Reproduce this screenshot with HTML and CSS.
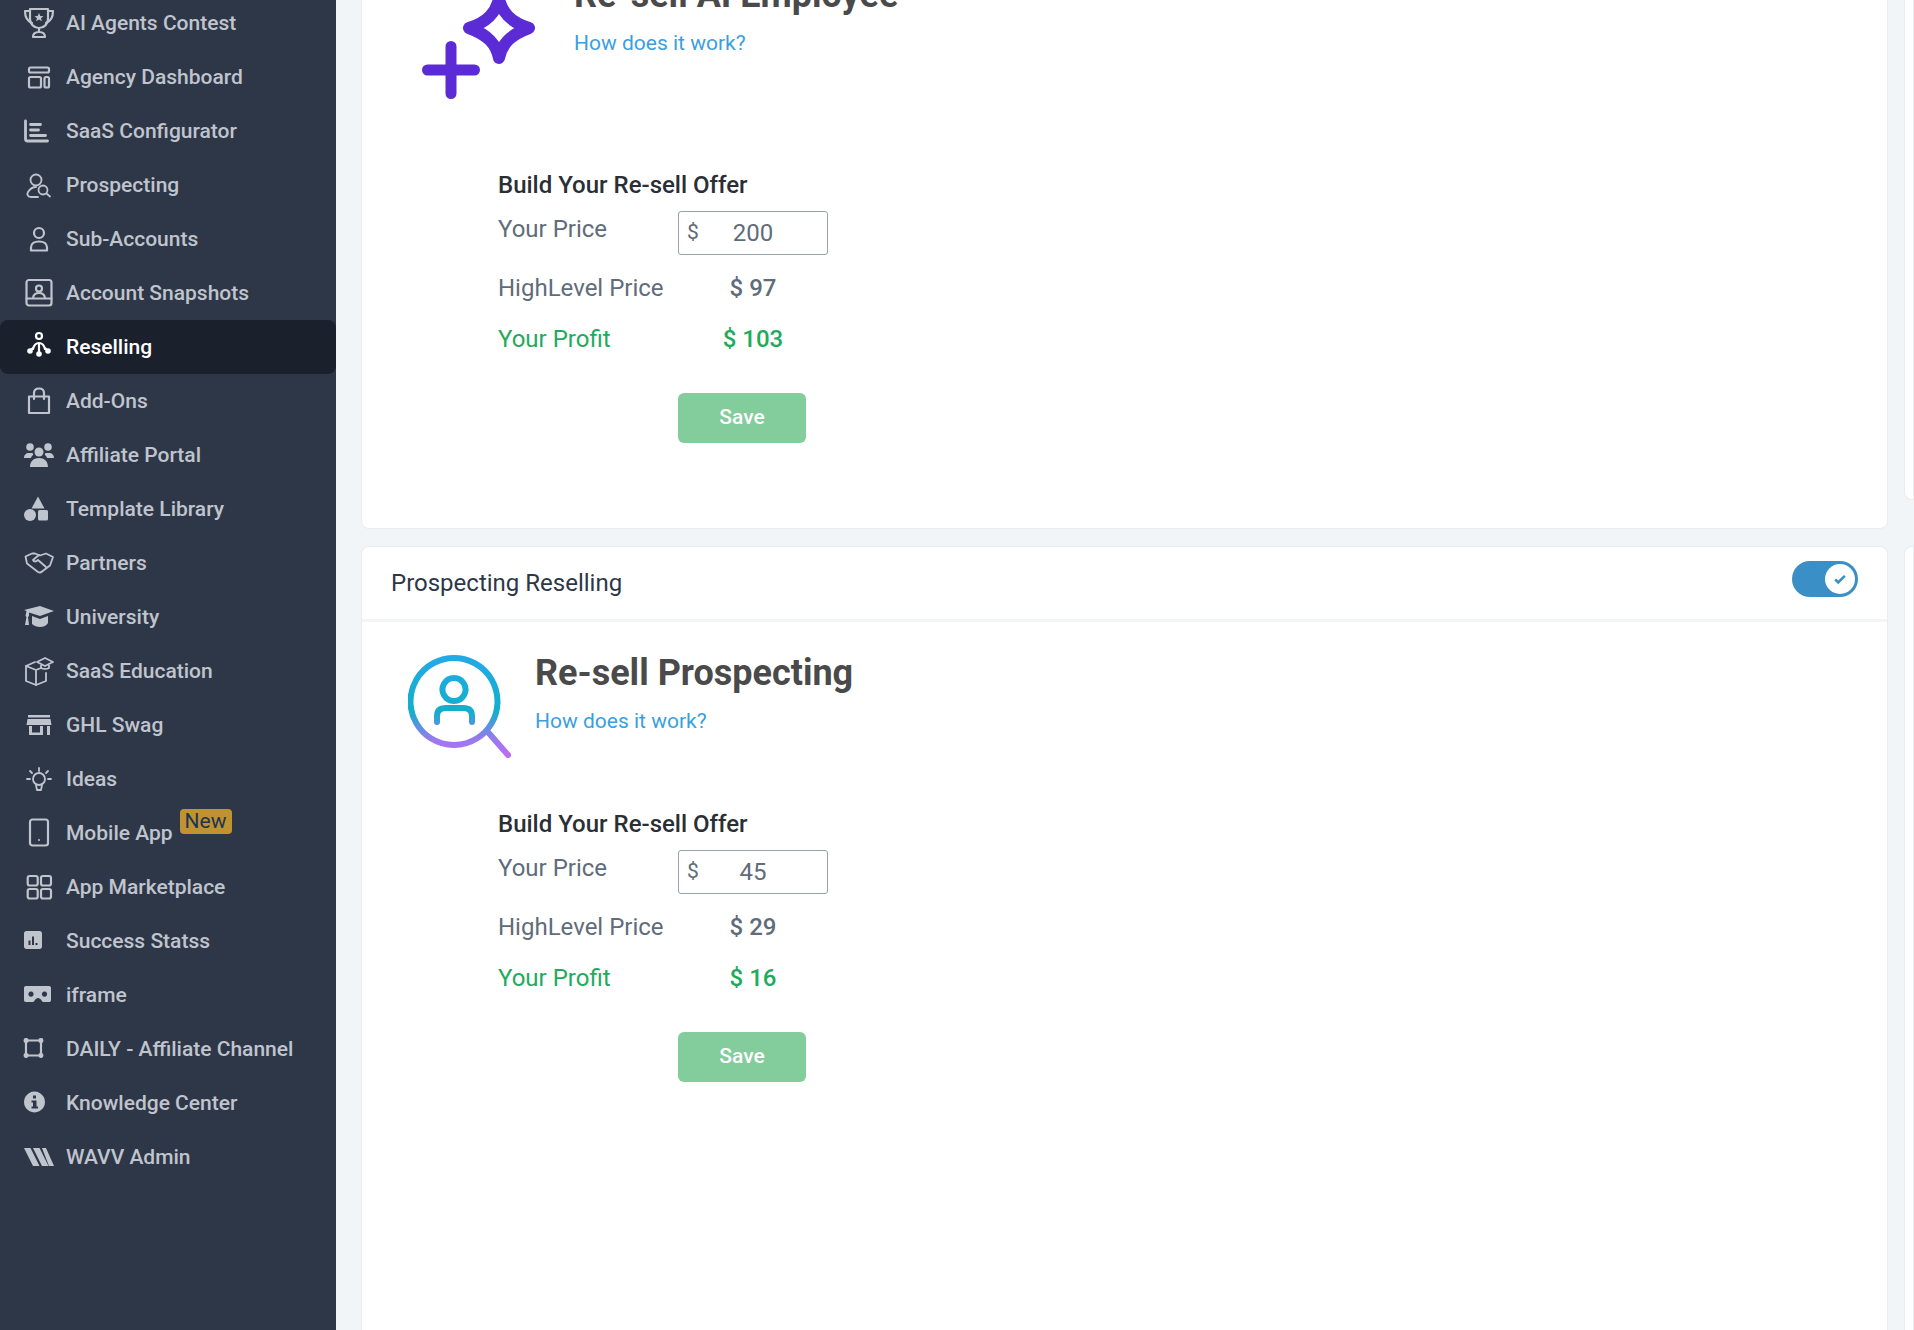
FILE: index.html
```html
<!DOCTYPE html>
<html lang="en">
<head>
  <meta charset="UTF-8" />
  <title>Reselling</title>
  <link rel="stylesheet" href="styles.css">
</head>
<body>
  <div class="app">
    <nav class="sidebar">
      <a class="nav-item"><svg class="nav-icon line" viewBox="0 0 34 34"><path d="M8 3h18v10c0 5-4 9-9 9s-9-4-9-9z"/><path d="M8 5H3c0 6 2 10 7 12M26 5h5c0 6-2 10-7 12"/><path d="M17 22v4M11 31c0-3 2-5 6-5s6 2 6 5z"/><path class="fill" d="M17 7l1.300 3 3.200.2-2.500 2 .9 3.100-2.900-1.800-2.900 1.800.9-3.100-2.500-2 3.200-.2z"/></svg><span>AI Agents Contest</span></a>
      <a class="nav-item"><svg class="nav-icon line" viewBox="0 0 34 34"><rect x="7" y="7.500" width="20" height="5" rx="1.500"/><rect x="7" y="17" width="12" height="10.500" rx="1.500"/><rect x="22.500" y="17" width="4.500" height="10.500" rx="1.500"/></svg><span>Agency Dashboard</span></a>
      <a class="nav-item"><svg class="nav-icon line heavy" viewBox="0 0 34 34"><path d="M3.500 7v18c0 1.500.5 2 2 2h20"/><path d="M8.500 10.500h10M8.500 16h8M8.500 21.500h15"/></svg><span>SaaS Configurator</span></a>
      <a class="nav-item"><svg class="nav-icon thin" viewBox="0 0 34 34"><circle cx="14" cy="12" r="5.500"/><path d="M16 29H9c-4 0-4-3-3-5 2-3 5-5 8-5"/><circle cx="21" cy="22" r="4.500"/><path d="M24.500 25.500l3.500 3"/></svg><span>Prospecting</span></a>
      <a class="nav-item"><svg class="nav-icon line" viewBox="0 0 34 34"><circle cx="17" cy="11" r="5"/><path d="M9 28.500v-3c0-4 3.500-6 8-6s8 2 8 6v3z"/></svg><span>Sub-Accounts</span></a>
      <a class="nav-item"><svg class="nav-icon line" viewBox="0 0 34 34"><rect x="4.500" y="4" width="25" height="25.500" rx="2.500"/><path d="M4.500 22.500h25"/><circle cx="17" cy="12.500" r="3"/><path d="M11 22c.5-3.500 3-5 6-5s5.500 1.500 6 5"/></svg><span>Account Snapshots</span></a>
      <a class="nav-item active"><svg class="nav-icon line" viewBox="0 0 34 34"><circle cx="17" cy="6" r="3"/><path d="M11 19c1-4 3-6 6-6s5 2 6 6M17 13v10M11 18l-3 3M23 18l3 3"/><circle class="fill" cx="8" cy="21" r="2.800"/><circle class="fill" cx="17" cy="24" r="2.800"/><circle class="fill" cx="26" cy="21" r="2.800"/></svg><span>Reselling</span></a>
      <a class="nav-item"><svg class="nav-icon line" viewBox="0 0 34 34"><path d="M7 12.500h20v16.500H7z"/><path d="M12 15V9c0-3 2-4.500 5-4.500s5 1.500 5 4.500v6"/></svg><span>Add-Ons</span></a>
      <a class="nav-item"><svg class="nav-icon solid" viewBox="0 0 34 34"><circle cx="8" cy="9" r="3.800"/><circle cx="26" cy="9" r="3.800"/><circle cx="17" cy="14" r="4.500"/><path d="M2 20c0-3 2-5 5-5h3c1 0 1.500 1 1 2-1 1-2 2-2 3zM32 20c0-3-2-5-5-5h-3c-1 0-1.500 1-1 2 1 1 2 2 2 3zM8 29c0-6 4-9 9-9s9 3 9 9z"/></svg><span>Affiliate Portal</span></a>
      <a class="nav-item"><svg class="nav-icon solid" viewBox="0 0 34 34"><path d="M16 4.500l6.500 12h-13z"/><circle cx="8" cy="23" r="6"/><rect x="16" y="18" width="10" height="10.500" rx="1.500"/></svg><span>Template Library</span></a>
      <a class="nav-item"><svg class="nav-icon thin" viewBox="0 0 34 34"><path d="M10 7.500l-6.500 3 1.500 7 11 8.500c2 1 3 .5 4-.5l8-6 3-8.500-7-3.500-6 2-5-2z"/><path d="M17 9l-6 5c1 2 3 2 5 0l8 7"/></svg><span>Partners</span></a>
      <a class="nav-item"><svg class="nav-icon solid" viewBox="0 0 34 34"><path d="M18 6l14 5-14 5-11-3.500v3.500l-1 1 1 8H3l1.500-8-1-1 1-5-2.500-1z"/><path d="M10 16l8 3 8-3v7c-2 3-5 4-8 4s-6-1-8-3z"/></svg><span>University</span></a>
      <a class="nav-item"><svg class="nav-icon thin" viewBox="0 0 34 34"><path d="M13 8l-9 4v15l10 4 10-4v-8"/><path d="M4 12l10 4 5-2M14 16v15"/><path d="M15 8l8-4 8 4-8 4zM19 10v4c2 1 6 1 8 0v-4"/></svg><span>SaaS Education</span></a>
      <a class="nav-item"><svg class="nav-icon solid" viewBox="0 0 34 34"><path d="M6 7h22v2.500H6zM5.500 11h23l1 6h-25zM7 18h3v9H7zM25 18h3v9h-3zM10 24.500h8V18h3v9H10z"/></svg><span>GHL Swag</span></a>
      <a class="nav-item"><svg class="nav-icon thin" viewBox="0 0 34 34"><circle cx="17" cy="17" r="6"/><path d="M14 23l1 5h4l1-5M17 6v3M8 9l2 2M26 9l-2 2M5 17h3M26 17h3"/></svg><span>Ideas</span></a>
      <a class="nav-item"><svg class="nav-icon line" viewBox="0 0 34 34"><rect x="8" y="3.500" width="18" height="26" rx="2.500"/><circle class="fill" cx="17" cy="24" r="1"/></svg><span>Mobile App</span><em class="badge">New</em></a>
      <a class="nav-item"><svg class="nav-icon line" viewBox="0 0 34 34"><rect x="5.700" y="6" width="10" height="9.500" rx="2"/><rect x="19" y="6" width="10" height="9.500" rx="2"/><rect x="5.700" y="19" width="10" height="9.500" rx="2"/><rect x="19" y="19" width="10" height="9.500" rx="2"/></svg><span>App Marketplace</span></a>
      <a class="nav-item"><svg class="nav-icon solid" viewBox="0 0 34 34"><path fill-rule="evenodd" d="M4.500 7h13c1.500 0 2.500 1 2.500 2.500v13c0 1.500-1 2.500-2.500 2.500h-13C3 25 2 24 2 22.500v-13C2 8 3 7 4.500 7zm2 9.500V21h2v-4.500zm3.500-4V21h2v-8.500zm3.500 6.500v2h2v-2z"/></svg><span>Success Statss</span></a>
      <a class="nav-item"><svg class="nav-icon solid" viewBox="0 0 34 34"><path fill-rule="evenodd" d="M4 8h23c1.500 0 2 1 2 2v12c0 1.500-1 2-2 2h-6c-1 0-2-4-5-4s-3.500 4-5 4H4c-1.500 0-2-1-2-2V10c0-1 .5-2 2-2zm5 5.500a2.600 2.600 0 1 0 .01 0zm13.500 0a2.600 2.600 0 1 0 .01 0z"/></svg><span>iframe</span></a>
      <a class="nav-item"><svg class="nav-icon line" viewBox="0 0 34 34"><path d="M4 9v14M19 9v14M4 8.500h15M4 23.500h15"/><rect x="2.700" y="7.200" width="2.800" height="2.800" rx="1"/><rect x="17.500" y="7.200" width="2.800" height="2.800" rx="1"/><rect x="2.700" y="22" width="2.800" height="2.800" rx="1"/><rect x="17.500" y="22" width="2.800" height="2.800" rx="1"/></svg><span>DAILY - Affiliate Channel</span></a>
      <a class="nav-item"><svg class="nav-icon solid" viewBox="0 0 34 34"><path fill-rule="evenodd" d="M12.500 5.500a10.500 10.500 0 1 1-.01 0zM11 9.500v3h3v-3zm-1.500 5v2H11v4H9.500v2h6.500v-2h-1.500v-6z"/></svg><span>Knowledge Center</span></a>
      <a class="nav-item"><svg class="nav-icon solid" viewBox="0 0 34 34"><path d="M2 8h6.500l9 18H11zM11 8h6.500l9 18H20zM20 8h4l8 18h-5z"/></svg><span>WAVV Admin</span></a>
    </nav>

    <main class="content">
      <div class="cards">
        <section class="card">
          <div class="card-header">
            <h2>AI Employee Reselling</h2>
          </div>
          <div class="hero hero-tall">
            <svg class="hero-icon hero-star" viewBox="0 0 114 106">
              <path d="M29 53.500v47M5.500 77h47" fill="none" stroke="#5b2bd6" stroke-width="11" stroke-linecap="round"/>
              <path d="M77 6c3 13 11 23 30 29-19 7-27 16-30 30-3-14-11-23-30-30 19-6 27-16 30-29z" fill="none" stroke="#5b2bd6" stroke-width="12" stroke-linejoin="round"/>
            </svg>
            <div class="hero-text">
              <h3>Re-sell AI Employee</h3>
              <a class="how-link">How does it work?</a>
            </div>
          </div>
          <div class="offer">
            <h4>Build Your Re-sell Offer</h4>
            <div class="offer-row price-row">
              <label>Your Price</label>
              <div class="price-input"><span>$</span><input type="text" value="200"></div>
            </div>
            <div class="offer-row">
              <label>HighLevel Price</label>
              <strong>$ 97</strong>
            </div>
            <div class="offer-row profit">
              <label>Your Profit</label>
              <strong>$ 103</strong>
            </div>
            <button class="save-btn">Save</button>
          </div>
        </section>

        <section class="card card-last">
          <div class="card-header">
            <h2>Prospecting Reselling</h2>
            <div class="toggle">
              <span class="knob"><svg viewBox="0 0 16 16"><path d="M2.500 8.500l3.500 3.500 7.500-7.500" fill="none" stroke="#3a8fc7" stroke-width="3"/></svg></span>
            </div>
          </div>
          <div class="hero">
            <svg class="hero-icon hero-glass" viewBox="0 0 103 103">
              <defs>
                <linearGradient id="glass" gradientUnits="userSpaceOnUse" x1="0" y1="0" x2="0" y2="103">
                  <stop offset="0" stop-color="#25a9e8"/>
                  <stop offset="0.55" stop-color="#12afcb"/>
                  <stop offset="0.82" stop-color="#9a78f0"/>
                  <stop offset="1" stop-color="#c06cf5"/>
                </linearGradient>
              </defs>
              <path d="M46 3a43.500 43.500 0 1 1-.01 0zM46 23a11.500 11.500 0 1 1-.01 0zM29 67v-6c0-6 4-8 9-8h17c5 0 9 2 9 8v6M79 76l21 24" fill="none" stroke="url(#glass)" stroke-width="6" stroke-linecap="round"/>
            </svg>
            <div class="hero-text">
              <h3>Re-sell Prospecting</h3>
              <a class="how-link">How does it work?</a>
            </div>
          </div>
          <div class="offer">
            <h4>Build Your Re-sell Offer</h4>
            <div class="offer-row price-row">
              <label>Your Price</label>
              <div class="price-input"><span>$</span><input type="text" value="45"></div>
            </div>
            <div class="offer-row">
              <label>HighLevel Price</label>
              <strong>$ 29</strong>
            </div>
            <div class="offer-row profit">
              <label>Your Profit</label>
              <strong>$ 16</strong>
            </div>
            <button class="save-btn">Save</button>
          </div>
        </section>
      </div>

      <aside class="side-cards">
        <div class="side-card side-card-top"></div>
        <div class="side-card side-card-bottom"></div>
      </aside>
    </main>
  </div>
</body>
</html>
```

FILE: styles.css
```css
* {
  box-sizing: border-box;
}

html, body {
  height: 1330px;
  overflow: hidden;
}

body {
  margin: 0;
  font-family: Roboto, "Liberation Sans", sans-serif;
  background: #f1f5f8;
}

.app {
  display: flex;
  height: 1330px;
  overflow: hidden;
}

/* sidebar */
.sidebar {
  flex: 0 0 336px;
  height: 1330px;
  background: #2d3748;
}

.nav-item {
  display: flex;
  align-items: center;
  height: 54px;
  padding-left: 22px;
  color: #c0c4cd;
  font-size: 21px;
  font-weight: 500;
  border-radius: 8px;
}

.nav-item:first-child {
  margin-top: -4px;
}

.nav-item.active {
  background: #1a202c;
  color: #ffffff;
}

.nav-icon {
  flex: 0 0 34px;
  width: 34px;
  height: 34px;
  margin-right: 10px;
}

.nav-icon.line, .nav-icon.thin {
  fill: none;
  stroke: currentColor;
  stroke-width: 2.2;
  stroke-linecap: round;
  stroke-linejoin: round;
}

.nav-icon.thin {
  stroke-width: 1.8;
}

.nav-icon.heavy {
  stroke-width: 2.8;
}

.nav-icon.solid, .nav-icon .fill {
  fill: currentColor;
  stroke: none;
}

.badge {
  margin: -23px 0 0 7px;
  padding: 0 5px;
  height: 25px;
  line-height: 24px;
  background: #c09230;
  color: #1c3554;
  font-style: normal;
  font-size: 21px;
  font-weight: 400;
  border-radius: 4px;
}

/* main area */
.content {
  flex: 1;
  display: flex;
  gap: 16px;
  padding-left: 25px;
  margin-top: -132px;
  height: 1600px;
}

.cards {
  flex: 0 0 1527px;
}

.card {
  background: #ffffff;
  border: 1px solid #e9edf1;
  border-radius: 8px;
  height: 661px;
  margin-bottom: 17px;
}

.card-last {
  height: 980px;
}

.card-header {
  display: flex;
  align-items: center;
  justify-content: space-between;
  height: 75px;
  padding: 0 29px;
  border-bottom: 3px solid #f1f5f8;
}

.card-header h2 {
  margin: -1px 0 0;
  font-size: 24px;
  font-weight: 400;
  color: #2d3748;
}

.toggle {
  display: flex;
  justify-content: flex-end;
  align-items: center;
  width: 66px;
  height: 36px;
  margin-top: -8px;
  padding-right: 3px;
  background: #3a8fc7;
  border-radius: 18px;
}

.knob {
  display: flex;
  align-items: center;
  justify-content: center;
  width: 30px;
  height: 30px;
  background: #ffffff;
  border-radius: 50%;
}

.knob svg {
  width: 14px;
  height: 14px;
}

.hero {
  display: flex;
  height: 188px;
  padding-top: 30px;
}

.hero-tall {
  height: 227px;
}

.hero-icon {
  flex: none;
}

.hero-star {
  width: 114px;
  height: 106px;
  margin: 19px 38px 0 60px;
}

.hero-glass {
  width: 103px;
  height: 103px;
  margin: 3px 24px 0 46px;
}

.hero-text h3 {
  margin: 0;
  font-size: 36px;
  line-height: 42px;
  font-weight: 700;
  color: #4a4a4a;
}

.how-link {
  display: block;
  margin-top: 13px;
  font-size: 21px;
  line-height: 28px;
  color: #3a9fe0;
}

/* offer form */
.offer {
  margin-left: 136px;
}

.offer h4 {
  margin: 0 0 12px;
  font-size: 24px;
  line-height: 28px;
  font-weight: 500;
  color: #2a2f35;
}

.offer-row {
  display: grid;
  grid-template-columns: 180px 150px;
  margin-bottom: 17px;
  font-size: 24px;
  line-height: 34px;
  color: #5f6c7a;
}

.offer-row strong {
  font-weight: 500;
  text-align: center;
}

.price-row {
  height: 44px;
  margin-bottom: 16px;
}

.price-row label {
  line-height: 36px;
}

.price-input {
  position: relative;
  height: 44px;
  border: 1px solid #9aa1a9;
  border-radius: 3px;
}

.price-input span {
  position: absolute;
  left: 8px;
  top: 3px;
  font-size: 21px;
}

.price-input input {
  width: 100%;
  height: 100%;
  padding: 0;
  border: none;
  outline: none;
  background: none;
  text-align: center;
  font-family: inherit;
  font-size: 24px;
  color: #5f6c7a;
}

.profit {
  color: #1fab5c;
  margin-bottom: 37px;
}

.save-btn {
  display: block;
  width: 128px;
  height: 50px;
  margin-left: 180px;
  padding-bottom: 3px;
  border: none;
  border-radius: 6px;
  background: #83cc9b;
  color: #ffffff;
  font-family: inherit;
  font-size: 21px;
  font-weight: 500;
}

/* next column, mostly off screen */
.side-cards {
  flex: 1;
  display: flex;
  flex-direction: column;
}

.side-card {
  background: #ffffff;
  border: 1px solid #e9edf1;
  border-radius: 8px 0 0 8px;
}

.side-card-top {
  height: 632px;
  margin-bottom: 46px;
}

.side-card-bottom {
  height: 900px;
}
```
